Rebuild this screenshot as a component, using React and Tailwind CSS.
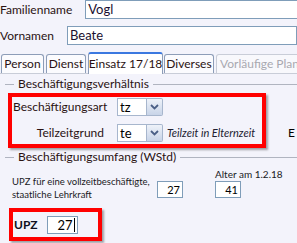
export default function App() {
  const Chevron = () => (
    <svg width="9" height="6" viewBox="0 0 9 6">
      <path d="M1 1 L4.5 4.5 L8 1" fill="none" stroke="#4a5f86" strokeWidth="1.8" />
    </svg>
  );
  const Select = ({ value }) => (
    <div className="flex h-[18px] w-[46px] shrink-0">
      <div className="flex-1 border border-[#a7b6cd] bg-white pl-[2px] text-[13px] leading-[16px] text-black">{value}</div>
      <div className="flex w-[16px] items-center justify-center rounded-r-[2px] border border-l-0 border-[#a7b6cd] bg-gradient-to-b from-[#eef2f9] to-[#c8d4e8]">
        <Chevron />
      </div>
    </div>
  );
  return (
    <div className="relative h-[243px] w-[297px] overflow-hidden whitespace-nowrap bg-[#f3f3fb] font-['Lato',sans-serif] text-[#2a1212]">
      {/* Name rows */}
      <div className="flex h-[19px] items-center">
        <div className="w-[75px] text-right text-[12px] leading-[19px]">Familienname</div>
        <div className="ml-[13px] h-[19px] w-[230px] shrink-0 border border-[#7f9db9] bg-white pl-[2px] text-[13px] leading-[17px] text-[#1a1030]">Vogl</div>
      </div>
      <div className="mt-[7px] flex h-[19px] items-center">
        <div className="w-[75px] text-right text-[12px] leading-[19px]">Vornamen</div>
        <div className="ml-[13px] h-[19px] w-[230px] shrink-0 border border-[#7f9db9] bg-white pl-[2px] text-[13px] leading-[17px] text-[#1a1030]">Beate</div>
      </div>

      {/* Tabs */}
      <div className="mt-[8px] flex h-[21px] items-end border-b border-[#c9cdd8] text-[12px] leading-[16px]">
        <div className="ml-[1px] flex h-[19px] w-[43px] shrink-0 items-end justify-center rounded-t-[3px] border border-b-0 border-[#8d9db8] bg-[#fbfbfe] pb-[1px]">Person</div>
        <div className="ml-[2px] flex h-[19px] w-[40px] shrink-0 items-end justify-center rounded-t-[3px] border border-b-0 border-[#8d9db8] bg-[#fbfbfe] pb-[1px]">Dienst</div>
        <div className="relative ml-[2px] -mb-px flex h-[22px] w-[75px] shrink-0 items-end justify-center rounded-t-[3px] border border-b-0 border-[#8d9db8] border-t-[2px] border-t-[#3b78e0] bg-white pb-[2px]">Einsatz 17/18</div>
        <div className="ml-[1px] flex h-[19px] w-[50px] shrink-0 items-end justify-center rounded-t-[3px] border border-b-0 border-[#8d9db8] bg-[#fbfbfe] pb-[1px]">Diverses</div>
        <div className="ml-[2px] flex h-[19px] w-[110px] shrink-0 items-end overflow-hidden rounded-t-[3px] border border-b-0 border-[#c9cdd8] bg-[#f8f8fc] pb-[1px] pl-[3px] text-[#a8a8b0]">Vorläufige Planung</div>
      </div>

      {/* Group 1 */}
      <div className="mt-[2px] flex h-[16px] items-center text-[12px]">
        <div className="ml-[5px] h-px w-[9px] bg-[#b0b4c0]" />
        <div className="ml-[4px] leading-[16px]">Beschäftigungsverhältnis</div>
        <div className="ml-[4px] h-px flex-1 bg-[#b0b4c0]" />
      </div>

      <div className="mt-[1px] ml-[8px] h-[55px] w-[258px] border-[4px] border-[#ff0000] shadow-[2px_2px_2px_rgba(0,0,0,0.35)]">
        <div className="mt-[1px] flex h-[18px] items-center text-[12px]">
          <div className="ml-[1px] w-[104px] leading-[16px]">Beschäftigungsart</div>
          <Select value="tz" />
        </div>
        <div className="mt-[8px] flex h-[18px] items-center text-[12px]">
          <div className="w-[92px] text-right leading-[16px]">Teilzeitgrund</div>
          <div className="ml-[13px]"><Select value="te" /></div>
          <div className="ml-[4px] text-[11px] italic leading-[14px] text-[#202030]">Teilzeit in Elternzeit</div>
        </div>
      </div>
      <div className="absolute left-[288px] top-[125px] text-[12px] leading-[16px] text-black">E</div>

      {/* Group 2 */}
      <div className="mt-[1px] flex h-[16px] items-center text-[12px]">
        <div className="ml-[5px] h-px w-[9px] bg-[#b0b4c0]" />
        <div className="ml-[4px] leading-[16px]">Beschäftigungsumfang (WStd)</div>
        <div className="ml-[4px] h-px flex-1 bg-[#b0b4c0]" />
      </div>

      <div className="mt-[3px] flex text-[9.5px] leading-[13px] text-[#1a1a24]">
        <div className="ml-[12px] mt-[7px] w-[140px] shrink-0">
          <div>UPZ für eine vollzeitbeschäftigte,</div>
          <div>staatliche Lehrkraft</div>
        </div>
        <div className="ml-[5px] mt-[13px] h-[17px] w-[26px] shrink-0 border border-[#7f9db9] bg-white pr-[2px] text-right text-[11px] leading-[15px] text-black">27</div>
        <div className="ml-[32px] flex shrink-0 flex-col items-start">
          <div className="text-[10px] leading-[12px]">Alter am 1.2.18</div>
          <div className="mt-[1px] h-[17px] w-[26px] border border-[#7f9db9] bg-white pr-[2px] text-right text-[11px] leading-[15px] text-black">41</div>
        </div>
      </div>

      <div className="mt-[7px] ml-[9px] flex h-[33px] w-[93px] items-center border-[4px] border-[#ff0000] shadow-[2px_2px_2px_rgba(0,0,0,0.35)]">
        <div className="ml-px text-[12px] font-bold leading-[16px] text-[#101020]">UPZ</div>
        <div className="ml-[9px] flex h-[18px] w-[31px] items-center justify-end border border-[#7f9db9] bg-white pr-[2px] text-[13px] leading-[16px] text-black">
          27<span className="ml-px inline-block h-[14px] w-px bg-black" />
        </div>
      </div>
    </div>
  );
}
